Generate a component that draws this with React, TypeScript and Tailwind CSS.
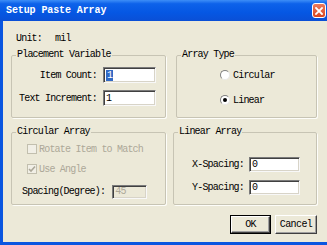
import React from 'react';

const mono = { fontFamily: '"Liberation Mono", "DejaVu Sans Mono", monospace' };

function Field({ value, selected, disabled, className }: { value: string; selected?: boolean; disabled?: boolean; className: string }) {
  return (
    <div
      className={`${className} flex items-center pl-[2px] border border-t-[#7a7a7a] border-l-[#7a7a7a] border-b-[#f8f8f8] border-r-[#f8f8f8] shadow-[inset_1px_1px_0_#404040,inset_-1px_-1px_0_#d8d4c8] ${disabled ? 'bg-[#ece9d8] text-[#aca899]' : 'bg-white text-black'}`}
    >
      {selected ? <span className="bg-[#316ac5] text-white px-[1px] leading-[11px]">{value}</span> : <span className="leading-[11px]">{value}</span>}
    </div>
  );
}

function Radio({ label, checked }: { label: string; checked?: boolean }) {
  return (
    <div className="flex items-center gap-[3px] h-[12px]">
      <div className="w-[10px] h-[10px] rounded-full bg-white border border-t-[#808080] border-l-[#808080] border-b-[#e8e8e8] border-r-[#e8e8e8] flex items-center justify-center">
        {checked && <div className="w-[4px] h-[4px] rounded-full bg-black" />}
      </div>
      <span>{label}</span>
    </div>
  );
}

function Check({ label, checked }: { label: string; checked?: boolean }) {
  return (
    <div className="flex items-center gap-[2px] h-[12px] text-[#aca899]">
      <div className="w-[10px] h-[10px] border border-[#c2bfae] bg-[#f1efe6] flex items-center justify-center">
        {checked && (
          <svg width="8" height="8" viewBox="0 0 8 8">
            <polyline points="1,4 3,6 7,1.5" fill="none" stroke="#aca899" strokeWidth="1.6" />
          </svg>
        )}
      </div>
      <span>{label}</span>
    </div>
  );
}

function Group({ title, className, children }: { title: string; className: string; children: React.ReactNode }) {
  return (
    <fieldset className={`${className} border border-[#c7c4b4] rounded-[2px] shadow-[1px_1px_0_#fdfdf9] min-w-0`}>
      <legend className="ml-[4px] px-[1px] leading-[12px]">{title}</legend>
      {children}
    </fieldset>
  );
}

function Button({ label, def, className }: { label: string; def?: boolean; className: string }) {
  return (
    <div className={`${className} h-[19px] flex items-center justify-center bg-[#ece9d8] ${def ? 'border border-black' : ''}`}>
      <div className="w-full h-full flex items-center justify-center border border-t-white border-l-white border-b-[#404040] border-r-[#404040] shadow-[inset_-1px_-1px_0_#a0a0a0]">
        {label}
      </div>
    </div>
  );
}

export default function App() {
  return (
    <div className="w-[327px] h-[245px] flex flex-col bg-[#0a56e0] text-[10px] tracking-[-0.8px] text-black" style={mono}>
      <div className="h-[21px] flex items-center justify-between pl-[6px] pr-[1px] bg-[linear-gradient(to_bottom,#3d8ef7_0%,#0d62ea_18%,#0557e3_60%,#0a4fd6_100%)]">
        <span className="text-white font-bold tracking-[-0.1px] text-[10px]">Setup Paste Array</span>
        <div className="w-[14px] h-[15px] rounded-[3px] border border-white bg-[linear-gradient(to_bottom,#ec7a5c,#d9461f)] flex items-center justify-center">
          <svg width="8" height="8" viewBox="0 0 8 8">
            <path d="M1 1 L7 7 M7 1 L1 7" stroke="white" strokeWidth="1.8" strokeLinecap="square" />
          </svg>
        </div>
      </div>

      <div className="flex-1 ml-[3px] mb-[3px] bg-[#ece9d8] flex flex-col pl-[8px] pr-[10px]">
        <div className="mt-[12px] h-[12px] leading-[12px] pl-[5px] flex">
          <span>Unit:</span>
          <span className="ml-[13px]">mil</span>
        </div>

        <div className="mt-[4px] flex gap-[10px]">
          <Group title="Placement Variable" className="w-[155px] h-[69px]">
            <div className="mt-[6px] pl-[7px] grid grid-cols-[78px_53px] gap-x-[6px] gap-y-[7px] items-center">
              <span className="text-right">Item Count:</span>
              <Field value="1" selected className="h-[16px]" />
              <span className="text-right">Text Increment:</span>
              <Field value="1" className="h-[16px]" />
            </div>
          </Group>
          <Group title="Array Type" className="w-[141px] h-[69px]">
            <div className="mt-[8px] pl-[43px] flex flex-col gap-[13px]">
              <Radio label="Circular" />
              <Radio label="Linear" checked />
            </div>
          </Group>
        </div>

        <div className="mt-[8px] flex gap-[7px]">
          <Group title="Circular Array" className="w-[155px] h-[79px]">
            <div className="mt-[5px] pl-[15px] flex flex-col gap-[8px]">
              <Check label="Rotate Item to Match" />
              <Check label="Use Angle" checked />
            </div>
            <div className="mt-[9px] pl-[10px] flex items-center gap-[7px]">
              <span>Spacing(Degree):</span>
              <Field value="45" disabled className="w-[35px] h-[14px]" />
            </div>
          </Group>
          <Group title="Linear Array" className="w-[144px] h-[79px]">
            <div className="mt-[19px] pl-[18px] grid grid-cols-[52px_51px] gap-x-[5px] gap-y-[8px] items-center">
              <span>X-Spacing:</span>
              <Field value="0" className="h-[15px]" />
              <span>Y-Spacing:</span>
              <Field value="0" className="h-[15px]" />
            </div>
          </Group>
        </div>

        <div className="mt-[10px] flex justify-end gap-[4px]">
          <Button label="OK" def className="w-[41px]" />
          <Button label="Cancel" className="w-[42px] tracking-[-0.6px]" />
        </div>
      </div>
    </div>
  );
}
